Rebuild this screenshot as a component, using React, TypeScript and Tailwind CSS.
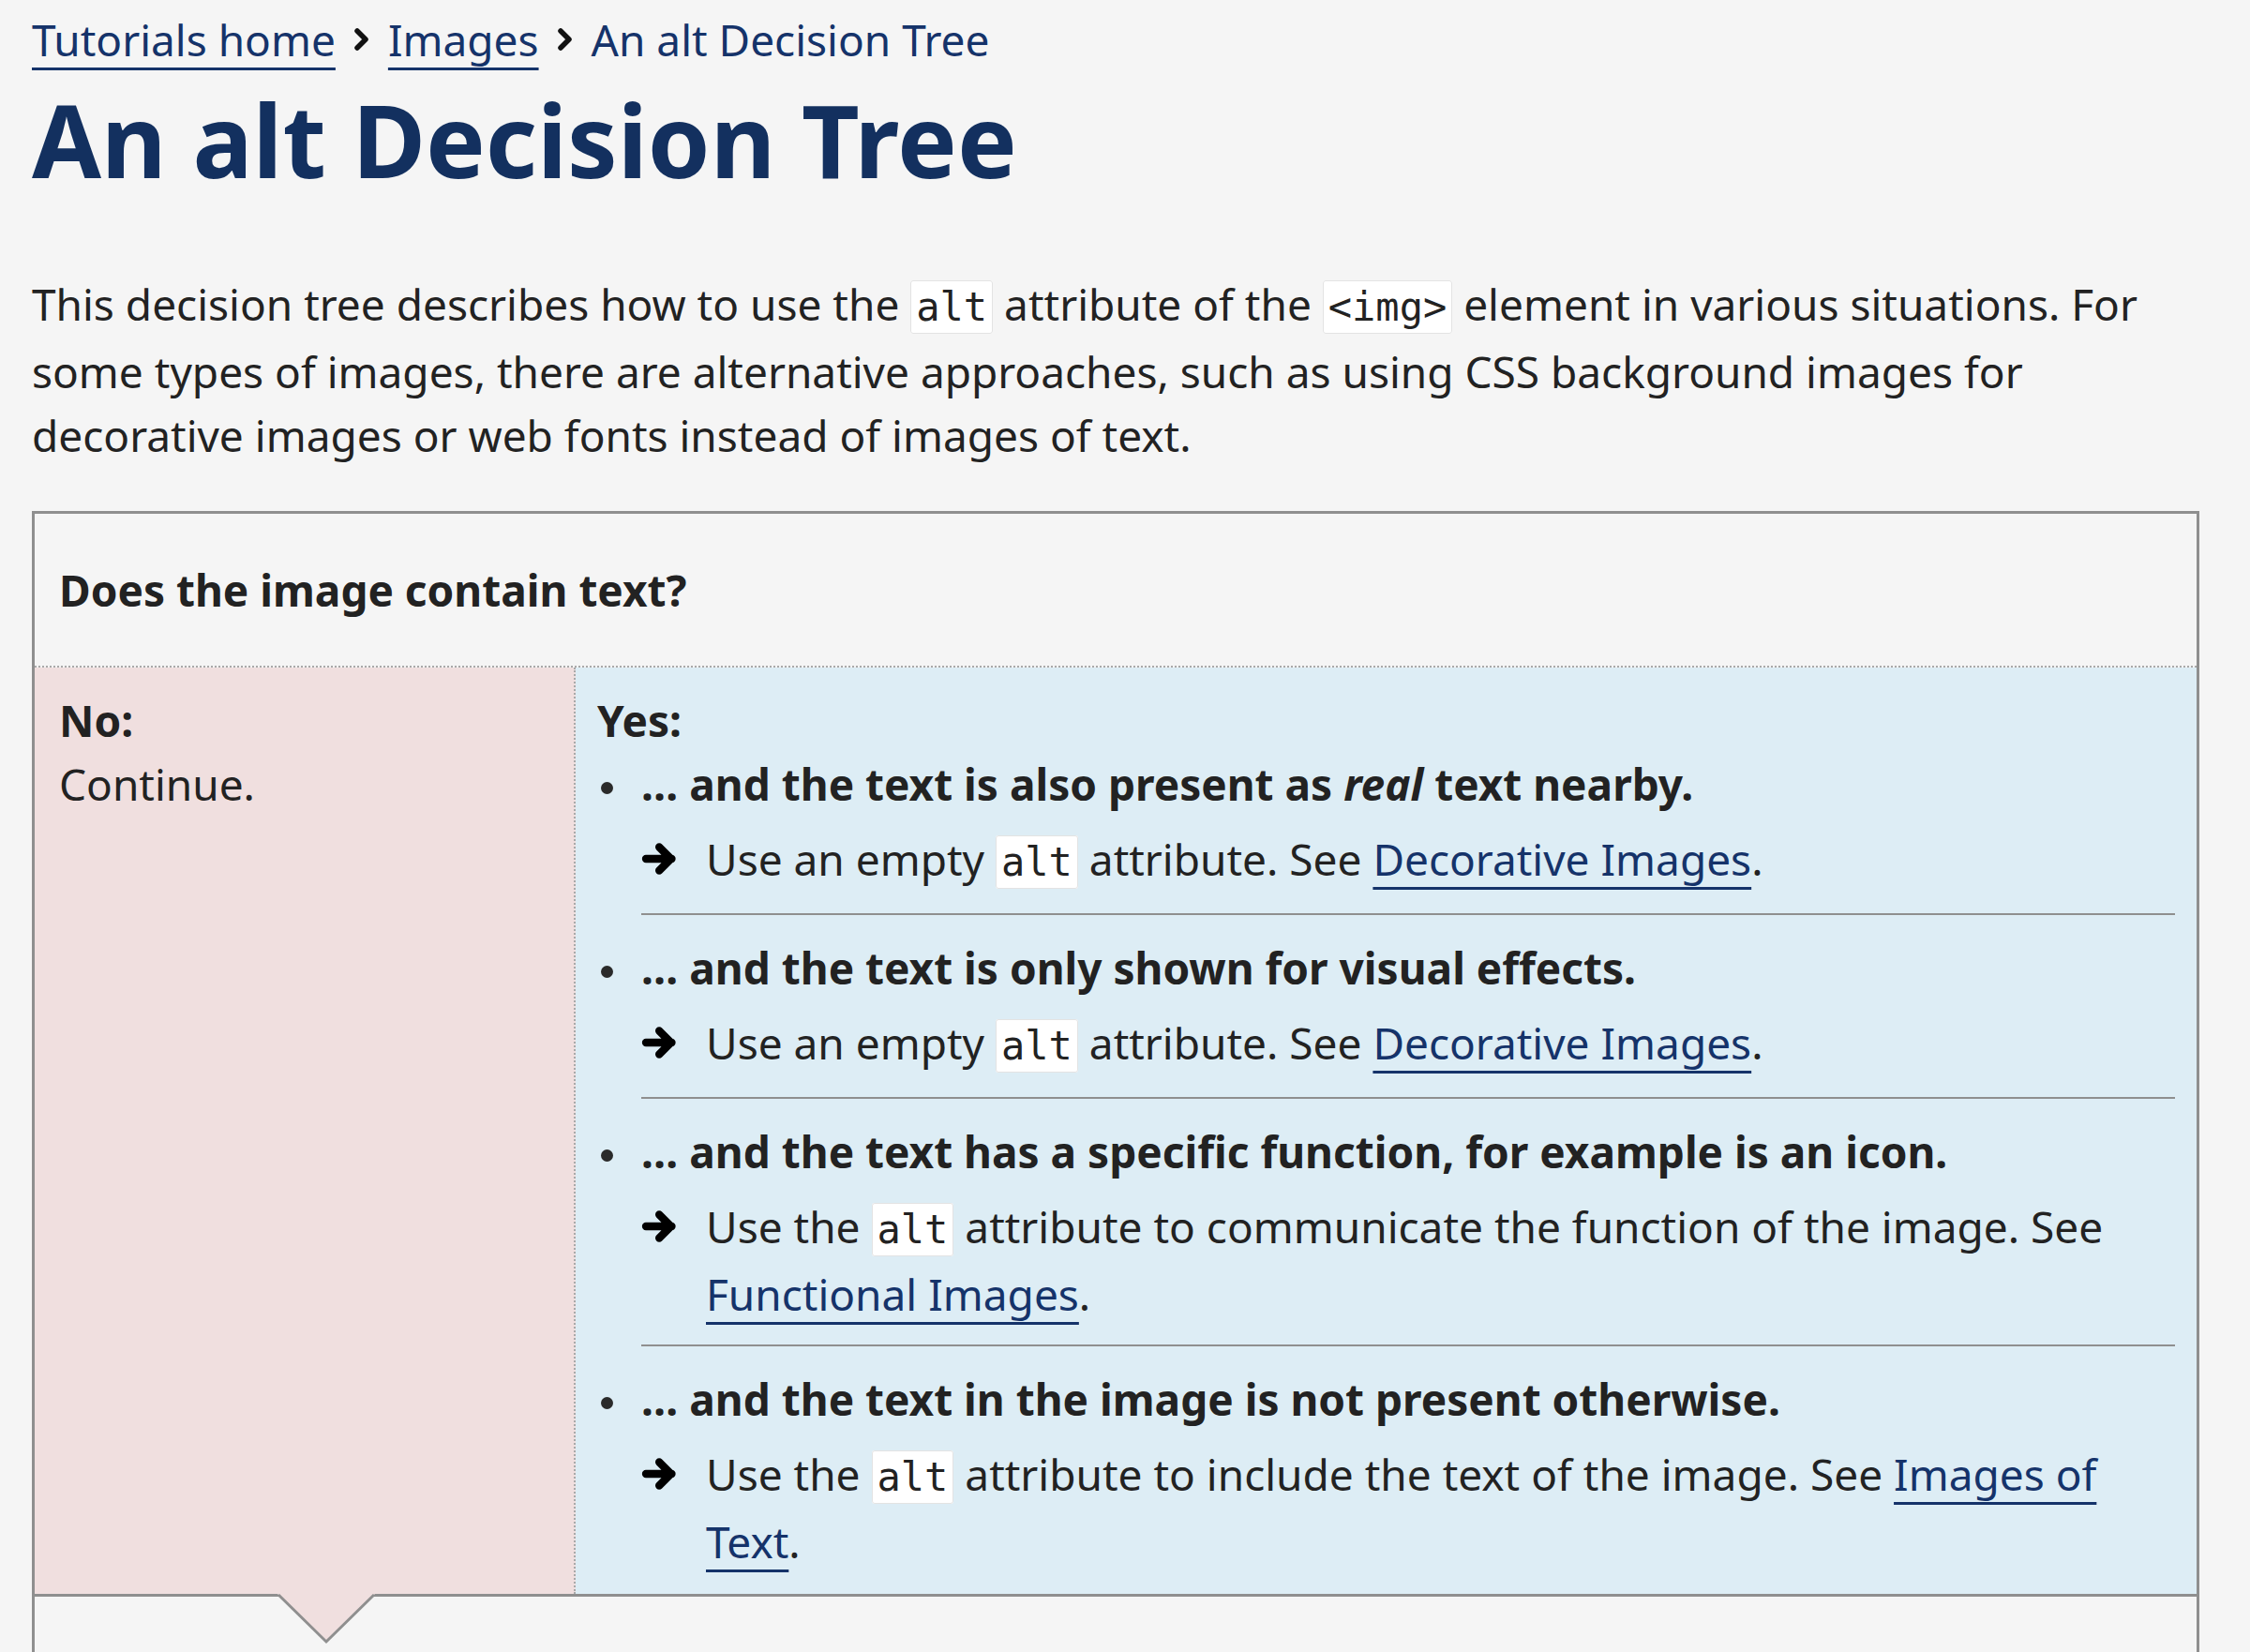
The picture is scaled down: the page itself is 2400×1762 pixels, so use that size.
import type { ReactNode } from 'react';

const linkCls =
  'text-[#15336a] underline decoration-[3px] underline-offset-[12px] decoration-[#15336a]';

function Chevron() {
  return (
    <svg viewBox="0 0 18 26" className="mx-[19px] h-[26px] w-[18px] shrink-0" aria-hidden>
      <polyline points="4,4 13,13 4,22" fill="none" stroke="#111" strokeWidth="5.5" strokeLinecap="round" strokeLinejoin="round" />
    </svg>
  );
}

function Code({ children }: { children: ReactNode }) {
  return (
    <code className="rounded-[3px] border border-[#e3e3e3] bg-white px-[5px] py-[3px] font-['DejaVu_Sans_Mono',monospace] text-[42px]">
      {children}
    </code>
  );
}

function A({ children }: { children: ReactNode }) {
  return (
    <a href="#" className={linkCls}>
      {children}
    </a>
  );
}

function Arrow() {
  return (
    <svg viewBox="0 0 24 24" className="mt-[14px] h-[40px] w-[40px]" aria-hidden>
      <path d="M3 12h16.5M11.5 4.5l7.5 7.5-7.5 7.5" fill="none" stroke="#000" strokeWidth="5" strokeLinecap="round" strokeLinejoin="round" />
    </svg>
  );
}

// one "Yes" case: bold condition, then the arrow with what to do
function Case({ title, children, first, last }: { title: ReactNode; children: ReactNode; first?: boolean; last?: boolean }) {
  return (
    <li className="flex">
      <div className={`w-[47px] shrink-0 ${first ? '' : 'pt-[22px]'}`}>
        <div className="ml-[4px] mt-[32px] h-[13px] w-[13px] rounded-full bg-[#2a2a2a]" />
      </div>
      <div className={`flex-1 ${first ? '' : 'pt-[22px]'} ${last ? 'pb-[22px]' : 'border-b-2 border-[#8f8f8f] pb-[20px]'}`}>
        <p className="font-bold">{title}</p>
        <div className="mt-[12px] flex">
          <div className="w-[69px] shrink-0">
            <Arrow />
          </div>
          <p className="flex-1">{children}</p>
        </div>
      </div>
    </li>
  );
}

export default function App() {
  return (
    <div className="h-screen overflow-hidden bg-[#f5f5f5] font-['Noto_Sans',sans-serif] text-[46px] leading-[68px] text-[#222]">
      <div className="pl-[34px] pr-[54px] pt-[8px]">
        <nav className="flex items-center text-[#15336a]">
          <A>Tutorials home</A>
          <Chevron />
          <A>Images</A>
          <Chevron />
          <span>An alt Decision Tree</span>
        </nav>

        <h1 className="mt-[7px] text-[107px] font-bold leading-[131px] text-[#13305f]">An alt Decision Tree</h1>

        <p className="mt-[76px]">
          This decision tree describes how to use the <Code>alt</Code> attribute of the <Code>&lt;img&gt;</Code> element in
          various situations. For some types of images, there are alternative approaches, such as using CSS background
          images for decorative images or web fonts instead of images of text.
        </p>

        {/* Decision tree box */}
        <div className="mt-[47px] border-x-[3px] border-t-[3px] border-[#8f8f8f]">
          <h2 className="px-[26px] pb-[47px] pt-[47px] font-bold">Does the image contain text?</h2>

          <div className="flex border-t-2 border-dotted border-[#a9a9a9]">
            <div className="w-[577px] shrink-0 border-r-2 border-dotted border-[#a9a9a9] bg-[#f0dfdf] px-[26px] pt-[22px]">
              <p className="font-bold">No:</p>
              <p>Continue.</p>
            </div>
            <div className="flex-1 bg-[#ddedf5] pl-[23px] pr-[23px] pt-[22px]">
              <p className="font-bold">Yes:</p>
              <ul>
                <Case
                  first
                  title={
                    <>
                      … and the text is also present as <em>real</em> text nearby.
                    </>
                  }
                >
                  Use an empty <Code>alt</Code> attribute. See <A>Decorative Images</A>.
                </Case>
                <Case title="… and the text is only shown for visual effects.">
                  Use an empty <Code>alt</Code> attribute. See <A>Decorative Images</A>.
                </Case>
                <Case title="… and the text has a specific function, for example is an icon.">
                  Use the <Code>alt</Code> attribute to communicate the function of the image. See{' '}
                  <A>Functional Images</A>.
                </Case>
                <Case last title="… and the text in the image is not present otherwise.">
                  Use the <Code>alt</Code> attribute to include the text of the image. See <A>Images of Text</A>.
                </Case>
              </ul>
            </div>
          </div>

          {/* next step, pointed to from the "No" branch */}
          <div className="relative h-[200px] border-t-[3px] border-[#8f8f8f]">
            <svg viewBox="0 0 104 54" className="absolute left-[259px] top-[-3px] h-[54px] w-[104px]" aria-hidden>
              <polygon points="0,0 104,0 52,51" fill="#f0dfdf" />
              <polyline points="1,1 52,51 103,1" fill="none" stroke="#8f8f8f" strokeWidth="3" />
            </svg>
          </div>
        </div>
      </div>
    </div>
  );
}
